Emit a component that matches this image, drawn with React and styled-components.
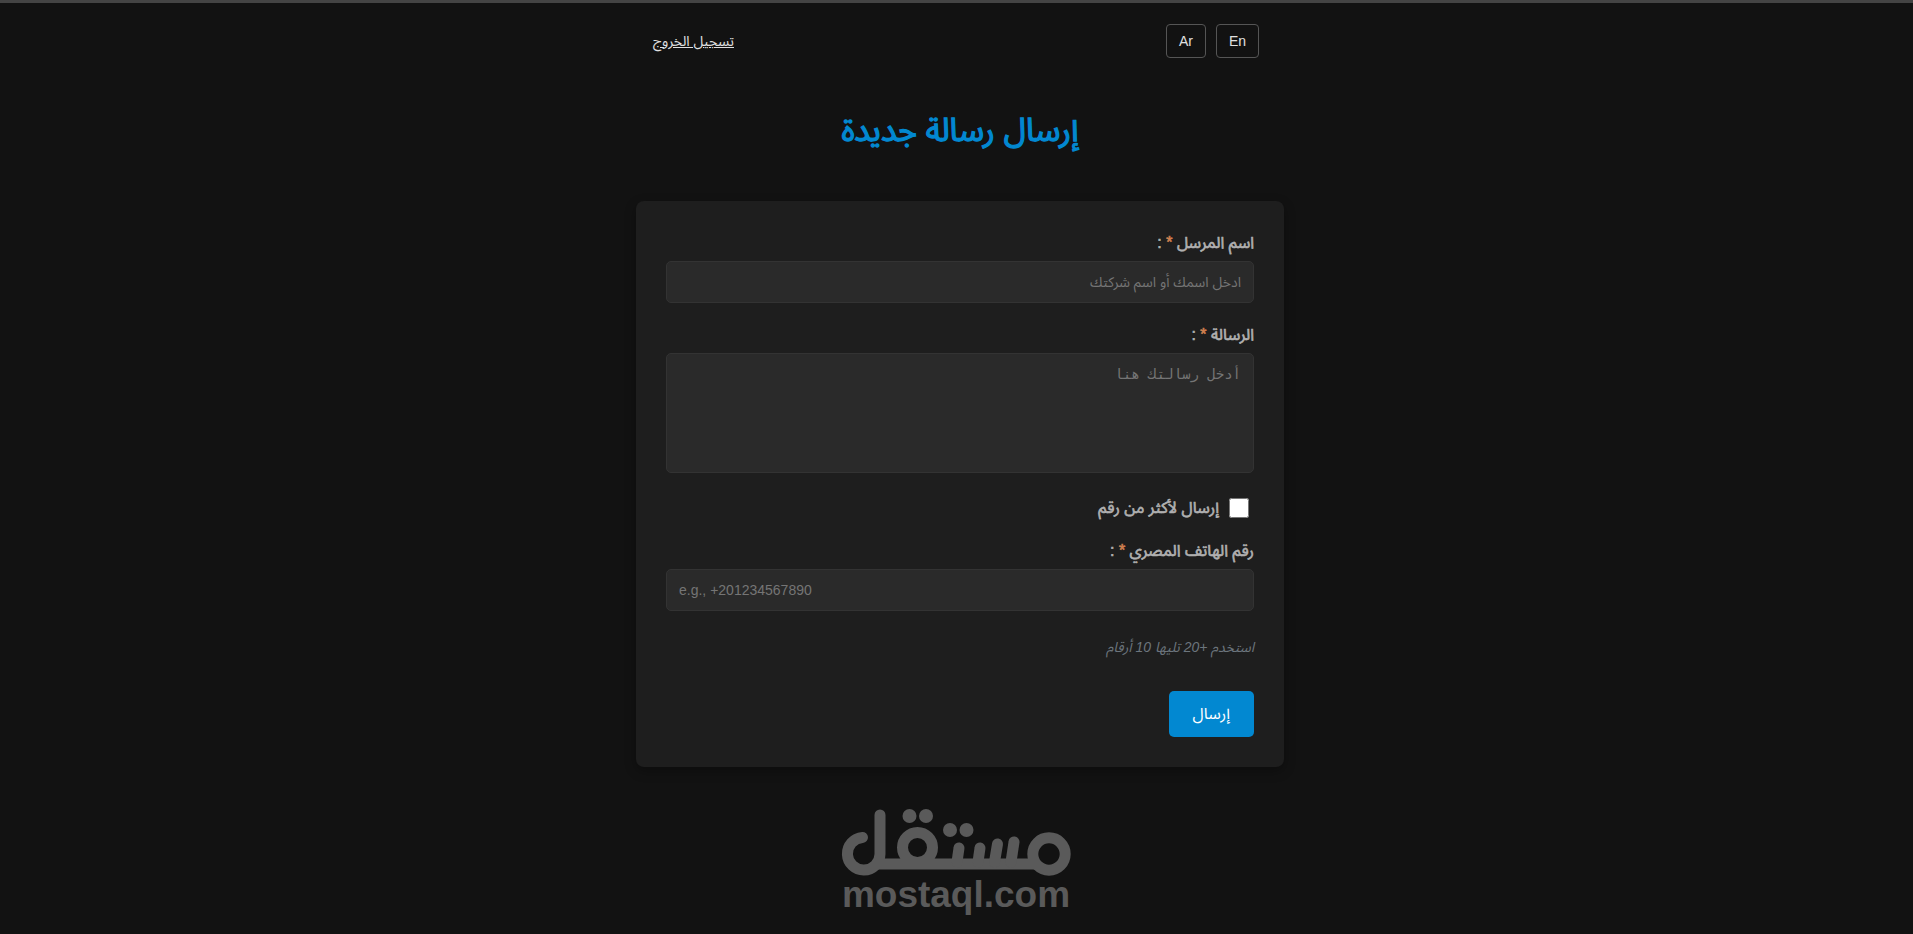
import { useState } from "react";
import styled, { createGlobalStyle, css } from "styled-components";

function Logo() {
  return (
    <LogoSvg viewBox="0 0 230 107" role="img" aria-label="مستقل mostaql.com">
      <g fill="none" stroke="#5a5a5a" strokeWidth="11" strokeLinecap="round">
        <path d="M21.500 28.500 A16.300 16.300 0 1 0 39 45 V6" />
        <circle cx="76.500" cy="38.500" r="15" />
        <circle cx="208" cy="45" r="16.200" />
        <path d="M34 55 H196" strokeLinecap="butt" />
        <path d="M116 53 L118 39" />
        <path d="M137 53 L139 39" />
        <path d="M153.500 53 L156.500 35" />
        <path d="M170 53 L173 33" />
      </g>
      <g fill="#5a5a5a">
        <circle cx="68.500" cy="7" r="7" />
        <circle cx="85" cy="7" r="7" />
        <circle cx="109" cy="21" r="7" />
        <circle cx="125.500" cy="21" r="7" />
      </g>
      <LogoText x="115" y="98" textAnchor="middle">
        mostaql.com
      </LogoText>
    </LogoSvg>
  );
}

function App() {
  const [sender, setSender] = useState("");
  const [message, setMessage] = useState("");
  const [multiple, setMultiple] = useState(false);
  const [phone, setPhone] = useState("");

  const onSubmit = (e) => {
    e.preventDefault();
  };

  return (
    <>
      <GlobalStyle />
      <Page dir="rtl" lang="ar">
        <Header>
          <LangGroup>
            <LangButton type="button">En</LangButton>
            <LangButton type="button">Ar</LangButton>
          </LangGroup>
          <LogoutLink href="#logout">تسجيل الخروج</LogoutLink>
        </Header>
        <Title>إرسال رسالة جديدة</Title>
        <Form onSubmit={onSubmit}>
          <Label htmlFor="sender">
            اسم المرسل <Star>*</Star> :
          </Label>
          <Input
            id="sender"
            placeholder="ادخل اسمك أو اسم شركتك"
            value={sender}
            onChange={(e) => setSender(e.target.value)}
          />
          <Label htmlFor="message">
            الرسالة <Star>*</Star> :
          </Label>
          <TextArea
            id="message"
            placeholder="أدخل رسالتك هنا"
            value={message}
            onChange={(e) => setMessage(e.target.value)}
          />
          <CheckRow>
            <Checkbox
              id="multiple"
              type="checkbox"
              checked={multiple}
              onChange={(e) => setMultiple(e.target.checked)}
            />
            <CheckLabel htmlFor="multiple">إرسال لأكثر من رقم</CheckLabel>
          </CheckRow>
          <Label htmlFor="phone">
            رقم الهاتف المصري <Star>*</Star> :
          </Label>
          <Input
            id="phone"
            type="tel"
            dir="ltr"
            placeholder="e.g., +201234567890"
            value={phone}
            onChange={(e) => setPhone(e.target.value)}
          />
          <Hint>استخدم +20 تليها 10 أرقام</Hint>
          <SubmitButton type="submit">إرسال</SubmitButton>
        </Form>
        <Logo />
      </Page>
    </>
  );
}

export default App;

const GlobalStyle = createGlobalStyle`
  * {
    box-sizing: border-box;
  }
  body {
    margin: 0;
    background-color: #121212;
    color: #e0e0e0;
    font-family: "Liberation Sans", "Noto Sans Arabic", Arial, sans-serif;
  }
`;

const ThickTextCSS = css`
  font-weight: 400;
  -webkit-text-stroke: 0.04em currentColor;
`;

const Page = styled.div`
  display: flex;
  flex-direction: column;
  align-items: center;
  min-height: 100vh;
  padding: 0 0 16px 7px;
  border-top: 3px solid #444444;
`;

const Header = styled.header`
  display: flex;
  justify-content: space-between;
  align-items: center;
  width: 100%;
  max-width: 648px;
  padding: 21px 25px 0 17px;
`;

const LangGroup = styled.div`
  display: flex;
  gap: 10px;
`;

const LangButton = styled.button`
  height: 34px;
  padding: 0 12px;
  border: 1px solid #555555;
  border-radius: 4px;
  background-color: transparent;
  color: #e0e0e0;
  font-family: inherit;
  font-size: 14px;
  cursor: pointer;
`;

const LogoutLink = styled.a`
  color: #e0e0e0;
  font-size: 14px;
`;

const Title = styled.h1`
  margin: 50px 0 48px;
  color: #0288d1;
  font-size: 32px;
  line-height: 45px;
  ${ThickTextCSS};
`;

const Form = styled.form`
  display: flex;
  flex-direction: column;
  align-items: flex-start;
  width: 100%;
  max-width: 648px;
  padding: 30px;
  border-radius: 8px;
  background-color: #1e1e1e;
  box-shadow: 0 4px 12px rgba(0, 0, 0, 0.3);
`;

const Label = styled.label`
  margin-bottom: 7px;
  color: #b0b0b0;
  font-size: 16px;
  line-height: 23px;
  ${ThickTextCSS};
`;

const Star = styled.span`
  color: #cf7f4f;
`;

const Input = styled.input`
  width: 100%;
  height: 42px;
  margin-bottom: 20px;
  padding: 0 12px;
  border: 1px solid #333333;
  border-radius: 5px;
  background-color: #2a2a2a;
  color: #e0e0e0;
  font-family: inherit;
  font-size: 14px;

  &::placeholder {
    color: #757575;
  }
`;

const TextArea = styled.textarea`
  width: 100%;
  height: 120px;
  margin-bottom: 20px;
  padding: 12px;
  border: 1px solid #333333;
  border-radius: 5px;
  background-color: #2a2a2a;
  color: #e0e0e0;
  font-family: monospace;
  font-size: 14px;
  resize: none;

  &::placeholder {
    color: #757575;
  }
`;

const CheckRow = styled.div`
  display: flex;
  align-items: center;
  gap: 10px;
  height: 30px;
  margin-bottom: 16px;
  padding-right: 5px;
`;

const Checkbox = styled.input`
  width: 20px;
  height: 20px;
  margin: 0;
`;

const CheckLabel = styled.label`
  color: #b0b0b0;
  font-size: 16px;
  ${ThickTextCSS};
`;

const Hint = styled.p`
  margin: 4px 0 32px;
  color: #6c757d;
  font-size: 14px;
  font-style: italic;
  line-height: 24px;
`;

const SubmitButton = styled.button`
  height: 46px;
  padding: 0 24px;
  border: none;
  border-radius: 5px;
  background-color: #0288d1;
  color: #ffffff;
  font-family: inherit;
  font-size: 16px;
  cursor: pointer;
`;

const LogoSvg = styled.svg`
  width: 230px;
  height: 107px;
  margin: 42px 8px 0 0;
  overflow: visible;
`;

const LogoText = styled.text`
  fill: #5a5a5a;
  direction: ltr;
  font-size: 37px;
  font-weight: bold;
`;
